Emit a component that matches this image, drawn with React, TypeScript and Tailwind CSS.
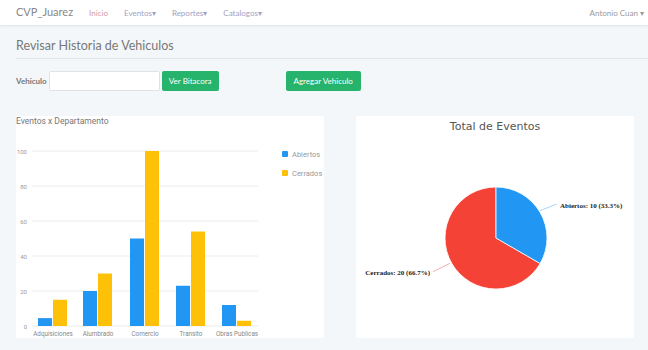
import React from 'react';

const departamentos = [
  { name: 'Adquisiciones', abiertos: 4.5, cerrados: 15, x: 22 },
  { name: 'Alumbrado', abiertos: 20, cerrados: 30, x: 67 },
  { name: 'Comercio', abiertos: 50, cerrados: 100, x: 114 },
  { name: 'Transito', abiertos: 23, cerrados: 54, x: 160 },
  { name: 'Obras Publicas', abiertos: 12, cerrados: 3, x: 206 },
];

const BLUE = '#2196f3';
const GOLD = '#ffc107';
const RED = '#f44336';

const BarChart: React.FC = () => {
  const zero = 210;
  const scale = 1.75;
  return (
    <svg width="308" height="222" viewBox="0 0 308 222" className="block">
      <text x="0" y="8" fontSize="8.5" fill="#777" fontFamily="Roboto, sans-serif">
        Eventos x Departamento
      </text>
      {[0, 20, 40, 60, 80, 100].map((v) => (
        <g key={v}>
          <line x1="16" x2="242" y1={zero - v * scale} y2={zero - v * scale} stroke="#ececec" strokeWidth="1" />
          <text x="11" y={zero - v * scale + 2.5} fontSize="6" fill="#999" textAnchor="end" fontFamily="Roboto, sans-serif">
            {v}
          </text>
        </g>
      ))}
      {departamentos.map((d) => (
        <g key={d.name}>
          <rect x={d.x} y={zero - d.abiertos * scale} width="14" height={d.abiertos * scale} fill={BLUE} />
          <rect x={d.x + 15} y={zero - d.cerrados * scale} width="14" height={d.cerrados * scale} fill={GOLD} />
          <text x={d.x + 15} y="220" fontSize="6.3" fill="#888" textAnchor="middle" fontFamily="Roboto, sans-serif">
            {d.name}
          </text>
        </g>
      ))}
      <rect x="266" y="35" width="6" height="6" rx="1" fill={BLUE} />
      <text x="276" y="41" fontSize="7.5" fill="#999" fontFamily="Roboto, sans-serif">Abiertos</text>
      <rect x="266" y="54" width="6" height="6" rx="1" fill={GOLD} />
      <text x="276" y="60" fontSize="7.5" fill="#999" fontFamily="Roboto, sans-serif">Cerrados</text>
    </svg>
  );
};

const PieChart: React.FC = () => {
  const cx = 140;
  const cy = 122;
  const r = 51;
  const ex = cx + r * Math.cos(Math.PI / 6);
  const ey = cy + r * Math.sin(Math.PI / 6);
  return (
    <svg width="278" height="222" viewBox="0 0 278 222" className="block">
      <text x="139" y="14" fontSize="11" fill="#555" textAnchor="middle" fontFamily="'DejaVu Sans', sans-serif">
        Total de Eventos
      </text>
      <path d={`M${cx} ${cy} L${ex} ${ey} A${r} ${r} 0 1 1 ${cx} ${cy - r} Z`} fill={RED} stroke="#fff" strokeWidth="0.8" />
      <path d={`M${cx} ${cy} L${cx} ${cy - r} A${r} ${r} 0 0 1 ${ex} ${ey} Z`} fill={BLUE} stroke="#fff" strokeWidth="0.8" />
      <path d="M184 94.7 L200.7 88" stroke="#90caf9" strokeWidth="0.8" fill="none" />
      <text x="204" y="92" fontSize="7" fontWeight="bold" fill="#222" fontFamily="'Liberation Serif', serif">
        Abiertos: 10 (33.3%)
      </text>
      <path d="M94 147.3 L77 155.7" stroke="#ef9a9a" strokeWidth="0.8" fill="none" />
      <text x="74" y="158.5" fontSize="7" fontWeight="bold" fill="#222" textAnchor="end" fontFamily="'Liberation Serif', serif">
        Cerrados: 20 (66.7%)
      </text>
    </svg>
  );
};

const App: React.FC = () => {
  return (
    <div className="w-[648px] h-[350px] overflow-hidden bg-[#f4f7fa] font-['Lato',sans-serif]">
      {/* Navbar */}
      <nav className="h-[26px] bg-white border-b border-[#e3e6ea] shadow-[0_1px_2px_rgba(0,0,0,0.04)] flex items-center px-4">
        <span className="text-[11px] text-[#888] mr-[16px]">CVP_Juarez</span>
        <div className="flex items-center gap-[16px] text-[8px]">
          <span className="text-[#cf9aa6]">Inicio</span>
          <span className="text-[#a39fc2]">Eventos▾</span>
          <span className="text-[#a39fc2]">Reportes▾</span>
          <span className="text-[#a39fc2]">Catalogos▾</span>
        </div>
        <span className="ml-auto text-[8px] text-[#999] -mr-[12px]">Antonio Cuan ▾</span>
      </nav>

      <div className="pl-4">
        <h1 className="pt-[11px] pb-[4px] text-[12.5px] text-[#777] border-b border-[#e2e5e8] leading-[17px]">
          Revisar Historia de Vehiculos
        </h1>

        <div className="flex items-center mt-[12px] h-[20px]">
          <label className="text-[8px] font-bold text-[#777] mr-[2px]">Vehiculo</label>
          <input className="w-[111px] h-[20px] bg-white border border-[#dfe3e7] rounded-[2px]" />
          <button className="ml-[2px] w-[57px] h-[20px] bg-[#26b36b] text-white text-[8px] rounded-[2px]">
            Ver Bitacora
          </button>
          <button className="ml-[67px] w-[75px] h-[20px] bg-[#26b36b] text-white text-[8px] rounded-[2px]">
            Agregar Vehiculo
          </button>
        </div>

        <div className="flex mt-[25px] gap-[32px]">
          <div className="w-[308px] h-[222px] bg-white">
            <BarChart />
          </div>
          <div className="w-[278px] h-[222px] bg-white">
            <PieChart />
          </div>
        </div>
      </div>
    </div>
  );
};

export default App;
